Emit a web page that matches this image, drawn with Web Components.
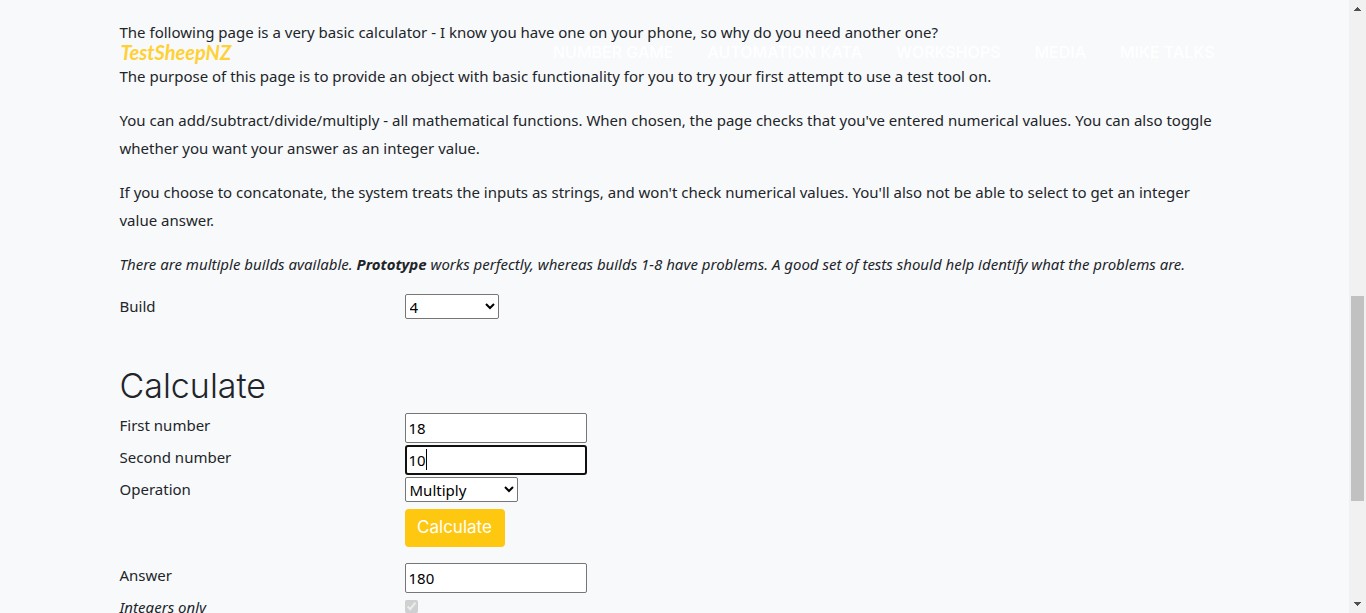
<!DOCTYPE html>
<html lang="en">
<head>
<meta charset="utf-8">
<meta name="viewport" content="width=device-width, initial-scale=1">
<title>TestSheepNZ - Basic Calculator</title>
<style>
  html, body { margin: 0; height: 100%; }
  body {
    background: #f8f9fb;
    color: #212529;
    font: 15px/28px "Noto Sans", "Open Sans", sans-serif;
    --heading-font: Inter, sans-serif;
    --brand: #fec810;
    overflow: hidden;
  }
</style>
</head>
<body>
<sheep-page>
  <site-header slot="header"></site-header>
  <calc-intro></calc-intro>
  <calc-form></calc-form>
</sheep-page>

<script>
class Base extends HTMLElement {
  constructor() {
    super();
    this.attachShadow({ mode: "open" });
  }
  connectedCallback() { this.shadowRoot.innerHTML = this.render(); }
}

/* Page frame: scrolling content with its scroll bar at the side */
customElements.define("sheep-page", class extends Base {
  render() {
    return `
    <style>
      :host { display: grid; grid-template-columns: minmax(0, 1fr) 17px; height: 100vh; }
      .view { position: relative; overflow-y: auto; scrollbar-width: none; min-height: 0; }
      main { max-width: 1110px; margin: 0 auto; padding: 18px 15px 40px; }
    </style>
    <div class="view">
      <slot name="header"></slot>
      <main><slot></slot></main>
    </div>
    <scroll-rail></scroll-rail>`;
  }
});

customElements.define("scroll-rail", class extends Base {
  render() {
    return `
    <style>
      :host { display: flex; flex-direction: column; background: #f1f1f1; }
      svg { display: block; flex: none; }
      .before { flex: 279; }
      .thumb { flex: 205; margin: 0 2px; background: #c1c1c1; }
      .after { flex: 95; }
    </style>
    <svg width="17" height="17" shape-rendering="crispEdges"><path fill="#505050" d="M8 7h1v1h1v1h1v1h1v1H5v-1h1V9h1V8h1z"/></svg>
    <div class="before"></div><div class="thumb"></div><div class="after"></div>
    <svg width="17" height="17" shape-rendering="crispEdges"><path fill="#505050" d="M5 6h7v1h-1v1h-1v1H9v1H8V9H7V8H6V7H5z"/></svg>`;
  }
});

/* Transparent navigation that lies over the page text */
customElements.define("site-header", class extends Base {
  render() {
    return `
    <style>
      :host { position: absolute; inset: 0 0 auto 0; z-index: 2; }
      nav {
        display: flex; justify-content: space-between; align-items: center;
        box-sizing: border-box; max-width: 1140px; height: 104px; margin: 0 auto; padding: 0 16px;
      }
      a { text-decoration: none; }
      .brand { color: #fed136; font: italic 700 20px/32px Lato, sans-serif; }
      ul { display: flex; gap: 34px; margin: 0; padding: 0 14px 0 0; list-style: none; }
      li a { color: #fff; font: 500 16px/24px var(--heading-font); text-transform: uppercase; white-space: nowrap; }
    </style>
    <nav>
      <a class="brand" href="#">TestSheepNZ</a>
      <ul>
        <li><a href="#number">Number Game</a></li>
        <li><a href="#kata">Automation Kata</a></li>
        <li><a href="#workshops">Workshops</a></li>
        <li><a href="#media">Media</a></li>
        <li><a href="#talks">Mike Talks</a></li>
      </ul>
    </nav>`;
  }
});

customElements.define("calc-intro", class extends Base {
  render() {
    return `
    <style>
      :host { display: block; }
      p { margin: 0 0 16px; }
      p:last-child { margin-bottom: 14px; }
    </style>
    <p>The following page is a very basic calculator - I know you have one on your phone, so why do you need another one?</p>
    <p>The purpose of this page is to provide an object with basic functionality for you to try your first attempt to use a test tool on.</p>
    <p>You can add/subtract/divide/multiply - all mathematical functions. When chosen, the page checks that you've entered numerical values. You can also toggle whether you want your answer as an integer value.</p>
    <p>If you choose to concatonate, the system treats the inputs as strings, and won't check numerical values. You'll also not be able to select to get an integer value answer.</p>
    <p><i>There are multiple builds available. <b>Prototype</b> works perfectly, whereas builds 1-8 have problems. A good set of tests should help identify what the problems are.</i></p>`;
  }
});

/* One label and its control; kind is text, select or check */
customElements.define("calc-field", class extends Base {
  render() {
    const kind = this.getAttribute("kind") || "text";
    const value = this.getAttribute("value") || "";
    const options = (this.getAttribute("options") || "").split(",");
    let control;
    if (kind === "select") {
      control = `<select id="c">${options.map(o => `<option${o === value ? " selected" : ""}>${o}</option>`).join("")}</select>`;
    } else if (kind === "check") {
      control = `<input id="c" type="checkbox" checked disabled>`;
    } else {
      control = `<input id="c" type="text" value="${value}">`;
    }
    return `
    <style>
      :host { display: grid; grid-template-columns: 285px minmax(0, 1fr); min-height: 32px; }
      label { height: 28px; }
      :host([kind="check"]) label { font-style: italic; }
      .control { position: relative; padding-top: 2px; line-height: 0; }
      input, select {
        box-sizing: border-box; margin: 0; color: #000; background: #fff;
        font: 15px/24px "Noto Sans", "Open Sans", sans-serif;
        border: 1px solid #767676; border-radius: 2px;
      }
      input[type="text"] { width: 182px; height: 30px; padding: 1px 3px; }
      select { width: var(--select-width, 113px); height: 25px; padding: 0; }
      input[type="checkbox"] { width: 13px; height: 13px; margin-top: 5px; }
      :host([active]) input { border: 2px solid #101010; border-radius: 3px; padding: 0 2px; }
      :host([active]) .control::after {
        content: ""; position: absolute; left: 21px; top: 6px; width: 1px; height: 21px; background: #000;
      }
    </style>
    <label for="c">${this.getAttribute("label")}</label>
    <div class="control">${control}</div>`;
  }
});

customElements.define("calc-form", class extends Base {
  render() {
    return `
    <style>
      :host { display: block; }
      .build { --select-width: 94px; }
      h2 { margin: 42px 0 5px; font: 300 34px/40px var(--heading-font); }
      .action { padding: 2px 0 14px 285px; line-height: 0; }
      button {
        width: 100px; height: 38px; padding: 0 0 2px; border: 0; border-radius: 4px;
        color: #fff; background: var(--brand); font: 400 17px/24px var(--heading-font);
      }
    </style>
    <calc-field class="build" kind="select" label="Build" value="4" options="Prototype,1,2,3,4,5,6,7,8"></calc-field>
    <h2>Calculate</h2>
    <calc-field label="First number" value="18"></calc-field>
    <calc-field label="Second number" value="10" active></calc-field>
    <calc-field kind="select" label="Operation" value="Multiply" options="Add,Subtract,Multiply,Divide,Concatenate"></calc-field>
    <div class="action"><button type="button">Calculate</button></div>
    <calc-field label="Answer" value="180"></calc-field>
    <calc-field kind="check" label="Integers only"></calc-field>`;
  }
});
</script>
</body>
</html>
